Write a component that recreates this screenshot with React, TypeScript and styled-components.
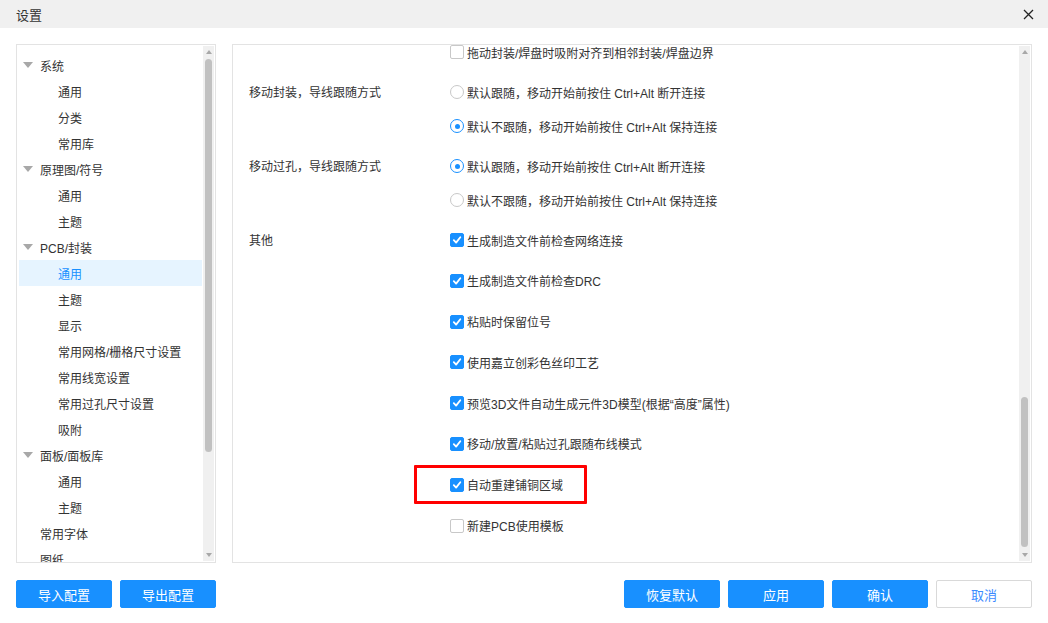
import styled, { createGlobalStyle } from "styled-components";

const GlobalStyle = createGlobalStyle`
    html, body {
        margin: 0;
        padding: 0;
        background: #fff;
    }
    body {
        font-family: "Liberation Sans", "Noto Sans CJK SC", sans-serif;
        font-size: 12px;
        color: #333;
    }
    * {
        box-sizing: border-box;
    }
`

const BLUE = "#1890ff";

const Dialog = styled.div`
    width: 1048px;
    height: 623px;
    display: flex;
    flex-direction: column;
    background: #fff;
    overflow: hidden;
`

const TitleBar = styled.div`
    height: 28px;
    flex: none;
    display: flex;
    align-items: center;
    justify-content: space-between;
    padding: 0 12px 0 16px;
    background: #f0f0f0;
    font-size: 13px;
    color: #333;
`

const CloseBtn = styled.button`
    width: 16px;
    height: 16px;
    padding: 0;
    border: none;
    background: transparent;
    display: flex;
    align-items: center;
    justify-content: center;
`

const Body = styled.div`
    display: flex;
    gap: 16px;
    padding: 16px 16px 0 16px;
    height: 535px;
    flex: none;
`

const Panel = styled.div<{ $width: number }>`
    width: ${p => p.$width}px;
    flex: none;
    border: 1px solid #e3e3e3;
    display: flex;
    overflow: hidden;
`

const TreeList = styled.div`
    flex: 1;
    padding: 7px 1px 0 2px;
    overflow: hidden;
`

const TreeRow = styled.div<{ $level: number; $active?: boolean }>`
    height: 26px;
    flex: none;
    display: flex;
    align-items: center;
    padding-left: ${p => (p.$level === 0 ? 3 : 39)}px;
    background: ${p => (p.$active ? "#e6f4ff" : "transparent")};
    color: ${p => (p.$active ? BLUE : "#333")};
    white-space: nowrap;
`

const Caret = styled.span<{ $hidden?: boolean }>`
    width: ${p => (p.$hidden ? 0 : 12)}px;
    margin-right: ${p => (p.$hidden ? 18 : 6)}px;
    display: flex;
    justify-content: center;
    &::before {
        content: "";
        display: ${p => (p.$hidden ? "none" : "block")};
        border-left: 5.5px solid transparent;
        border-right: 5.5px solid transparent;
        border-top: 6px solid #a8a8a8;
    }
`

const ScrollBar = styled.div`
    width: 11px;
    flex: none;
    margin: 1px 1px 1px 0;
    background: #f0f0f0;
    display: flex;
    flex-direction: column;
    align-items: center;
`

const Arrow = styled.div<{ $down?: boolean }>`
    height: 12px;
    flex: none;
    display: flex;
    align-items: center;
    &::before {
        content: "";
        border-left: 3.5px solid transparent;
        border-right: 3.5px solid transparent;
        ${p => (p.$down ? "border-top" : "border-bottom")}: 4px solid #a8a8a8;
    }
`

const Track = styled.div`
    flex: 1;
    width: 100%;
    display: flex;
    justify-content: center;
`

const Thumb = styled.div<{ $top: number; $height: number }>`
    width: 7px;
    margin-top: ${p => p.$top}px;
    height: ${p => p.$height}px;
    border-radius: 4px;
    background: #c1c1c1;
`

const Content = styled.div`
    flex: 1;
    overflow: hidden;
`

const Scroller = styled.div`
    margin-top: -10px;
    display: flex;
    flex-direction: column;
    gap: 6px;
`

const Section = styled.div`
    display: flex;
`

const Label = styled.div`
    width: 217px;
    flex: none;
    padding-left: 16px;
    height: 34px;
    line-height: 37px;
    white-space: nowrap;
`

const Options = styled.div<{ $gap: number }>`
    display: flex;
    flex-direction: column;
    align-items: flex-start;
    gap: ${p => p.$gap}px;
`

const Option = styled.label`
    height: 34px;
    display: flex;
    align-items: center;
    gap: 3px;
    white-space: nowrap;
    color: #333;
    position: relative;
`

const Box = styled.span<{ $checked?: boolean }>`
    width: 14px;
    height: 14px;
    border-radius: 2px;
    border: 1px solid ${p => (p.$checked ? BLUE : "#c8c8c8")};
    background: ${p => (p.$checked ? BLUE : "#fff")};
    display: flex;
    align-items: center;
    justify-content: center;
`

const Radio = styled.span<{ $checked?: boolean }>`
    width: 14px;
    height: 14px;
    border-radius: 50%;
    border: 1px solid ${p => (p.$checked ? BLUE : "#c8c8c8")};
    background: #fff;
    display: flex;
    align-items: center;
    justify-content: center;
    &::after {
        content: "";
        width: 5px;
        height: 5px;
        border-radius: 50%;
        background: ${p => (p.$checked ? BLUE : "transparent")};
    }
`

const Highlight = styled.span`
    position: absolute;
    left: -36px;
    right: -24px;
    top: -3px;
    bottom: -2px;
    border: 3px solid #f00;
    border-radius: 1px;
    pointer-events: none;
`

const Footer = styled.div`
    display: flex;
    justify-content: space-between;
    padding: 17px 16px 0 16px;
`

const BtnGroup = styled.div`
    display: flex;
    gap: 8px;
`

const Btn = styled.button<{ $plain?: boolean }>`
    width: 96px;
    height: 28px;
    border-radius: 2px;
    border: 1px solid ${p => (p.$plain ? "#d9d9d9" : BLUE)};
    background: ${p => (p.$plain ? "#fff" : BLUE)};
    color: ${p => (p.$plain ? "#3d8bff" : "#fff")};
    font-family: "Liberation Sans", "Noto Sans CJK SC", sans-serif;
    font-size: 13px;
    padding: 0;
`

interface TreeItem {
    label: string;
    level: number;
    active?: boolean;
    leaf?: boolean;
}

const tree: TreeItem[] = [
    { label: "系统", level: 0 },
    { label: "通用", level: 1 },
    { label: "分类", level: 1 },
    { label: "常用库", level: 1 },
    { label: "原理图/符号", level: 0 },
    { label: "通用", level: 1 },
    { label: "主题", level: 1 },
    { label: "PCB/封装", level: 0 },
    { label: "通用", level: 1, active: true },
    { label: "主题", level: 1 },
    { label: "显示", level: 1 },
    { label: "常用网格/栅格尺寸设置", level: 1 },
    { label: "常用线宽设置", level: 1 },
    { label: "常用过孔尺寸设置", level: 1 },
    { label: "吸附", level: 1 },
    { label: "面板/面板库", level: 0 },
    { label: "通用", level: 1 },
    { label: "主题", level: 1 },
    { label: "常用字体", level: 0, leaf: true },
    { label: "图纸", level: 0, leaf: true },
]

interface Opt {
    text: string;
    checked: boolean;
    mark?: boolean;
}

interface Group {
    label: string;
    type: "check" | "radio";
    gap: number;
    options: Opt[];
}

const groups: Group[] = [
    {
        label: "", type: "check", gap: 0, options: [
            { text: "拖动封装/焊盘时吸附对齐到相邻封装/焊盘边界", checked: false },
        ]
    },
    {
        label: "移动封装，导线跟随方式", type: "radio", gap: 0, options: [
            { text: "默认跟随，移动开始前按住 Ctrl+Alt 断开连接", checked: false },
            { text: "默认不跟随，移动开始前按住 Ctrl+Alt 保持连接", checked: true },
        ]
    },
    {
        label: "移动过孔，导线跟随方式", type: "radio", gap: 0, options: [
            { text: "默认跟随，移动开始前按住 Ctrl+Alt 断开连接", checked: true },
            { text: "默认不跟随，移动开始前按住 Ctrl+Alt 保持连接", checked: false },
        ]
    },
    {
        label: "其他", type: "check", gap: 6.8, options: [
            { text: "生成制造文件前检查网络连接", checked: true },
            { text: "生成制造文件前检查DRC", checked: true },
            { text: "粘贴时保留位号", checked: true },
            { text: "使用嘉立创彩色丝印工艺", checked: true },
            { text: "预览3D文件自动生成元件3D模型(根据“高度”属性)", checked: true },
            { text: "移动/放置/粘贴过孔跟随布线模式", checked: true },
            { text: "自动重建铺铜区域", checked: true, mark: true },
            { text: "新建PCB使用模板", checked: false },
        ]
    },
]

function Check() {
    return (
        <svg width="10" height="10" viewBox="0 0 10 10">
            <path d="M1.8 5.2 L4.1 7.6 L8.3 2.2" fill="none" stroke="#fff" strokeWidth="1.8" strokeLinecap="round" strokeLinejoin="round" />
        </svg>
    )
}

function App() {
    return (
        <Dialog>
            <GlobalStyle />
            <TitleBar>
                <span>设置</span>
                <CloseBtn>
                    <svg width="11" height="11" viewBox="0 0 11 11">
                        <path d="M1 1 L10 10 M10 1 L1 10" stroke="#222" strokeWidth="1.3" />
                    </svg>
                </CloseBtn>
            </TitleBar>
            <Body>
                <Panel $width={200}>
                    <TreeList>
                        {tree.map((t, i) => (
                            <TreeRow key={i} $level={t.level} $active={t.active}>
                                {t.level === 0 && <Caret $hidden={t.leaf} />}
                                {t.label}
                            </TreeRow>
                        ))}
                    </TreeList>
                    <ScrollBar>
                        <Arrow />
                        <Track><Thumb $top={1} $height={393} /></Track>
                        <Arrow $down />
                    </ScrollBar>
                </Panel>
                <Panel $width={800}>
                    <Content>
                        <Scroller>
                            {groups.map((g, gi) => (
                                <Section key={gi}>
                                    <Label>{g.label}</Label>
                                    <Options $gap={g.gap}>
                                        {g.options.map((o, oi) => (
                                            <Option key={oi}>
                                                {g.type === "check"
                                                    ? <Box $checked={o.checked}>{o.checked && <Check />}</Box>
                                                    : <Radio $checked={o.checked} />}
                                                <span>{o.text}</span>
                                                {o.mark && <Highlight />}
                                            </Option>
                                        ))}
                                    </Options>
                                </Section>
                            ))}
                        </Scroller>
                    </Content>
                    <ScrollBar>
                        <Arrow />
                        <Track><Thumb $top={339} $height={150} /></Track>
                        <Arrow $down />
                    </ScrollBar>
                </Panel>
            </Body>
            <Footer>
                <BtnGroup>
                    <Btn>导入配置</Btn>
                    <Btn>导出配置</Btn>
                </BtnGroup>
                <BtnGroup>
                    <Btn>恢复默认</Btn>
                    <Btn>应用</Btn>
                    <Btn>确认</Btn>
                    <Btn $plain>取消</Btn>
                </BtnGroup>
            </Footer>
        </Dialog>
    )
}

export default App;
